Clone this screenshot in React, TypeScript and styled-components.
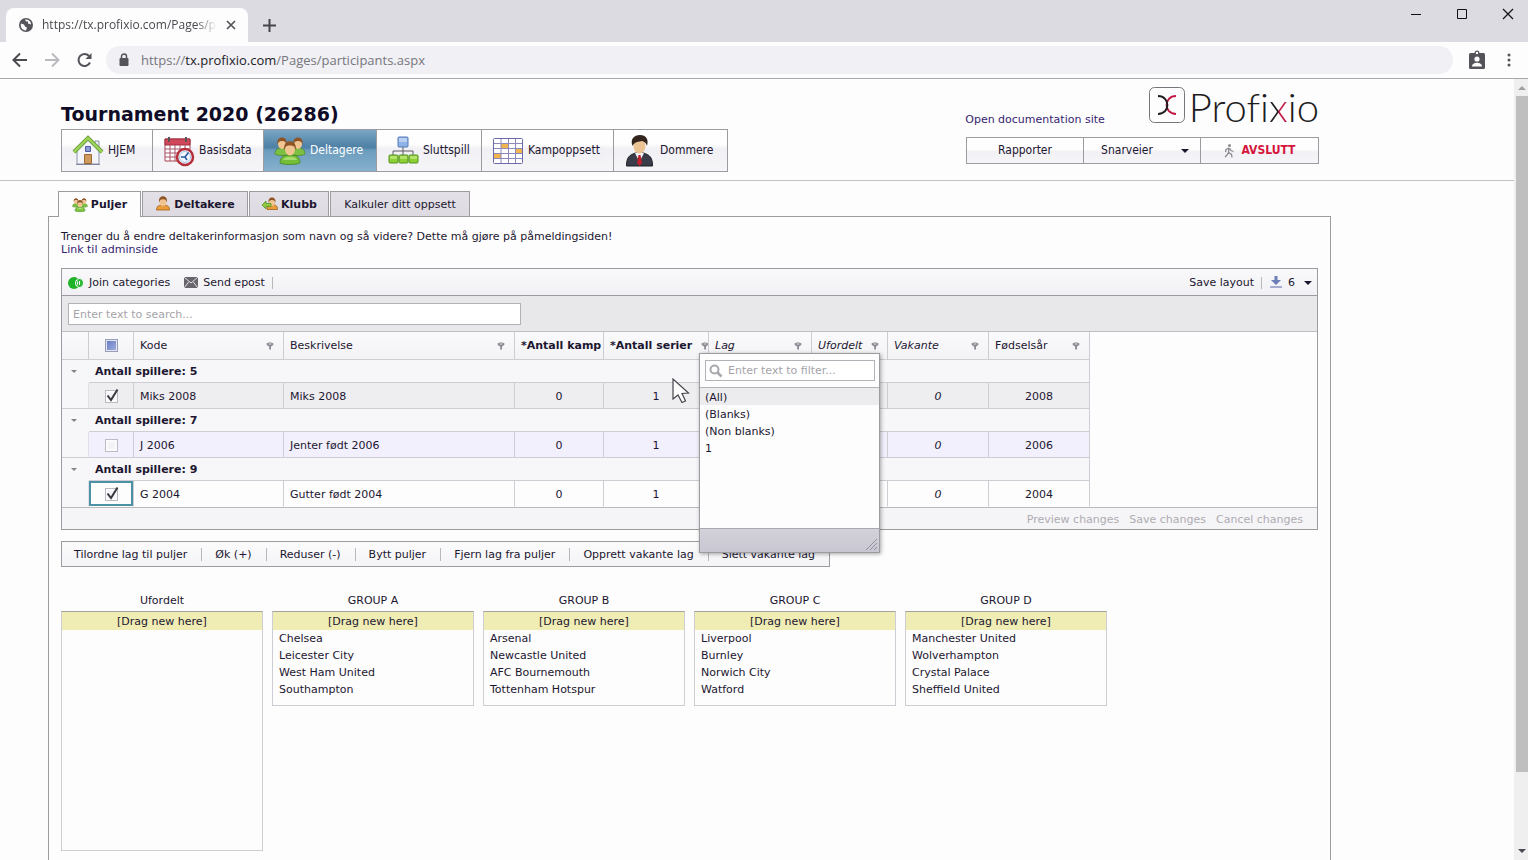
import React from "react";
import styled, { createGlobalStyle, css } from "styled-components";

const ink = "#1c1630";
const line = "#9c9b9f";
const softLine = "#cfcdd4";
const verdana = `"DejaVu Sans", Verdana, sans-serif`;
const tahoma = `"DejaVu Sans Condensed", Tahoma, sans-serif`;
const segoe = `"Open Sans", "Segoe UI", sans-serif`;

const GlobalStyle = createGlobalStyle`
  *, *::before, *::after { box-sizing: border-box; }
  body { margin: 0; background: #fdfdfd; color: ${ink}; font-family: ${verdana}; font-size: 11px; line-height: 13px; }
  button, input { font: inherit; color: inherit; }
  button { background: none; border: 0; padding: 0; cursor: pointer; white-space: nowrap; }
  a { color: #35246f; text-decoration: none; }
  svg { display: block; flex: none; }
`;

/* ---------- browser window ---------- */

const Window = styled.div`
  display: flex;
  flex-direction: column;
  height: 100vh;
`;

const TabStrip = styled.div`
  display: flex;
  align-items: flex-end;
  height: 42px;
  padding-left: 6px;
  background: #dcdbe1;
`;

const BrowserTab = styled.div`
  display: flex;
  align-items: center;
  width: 242px;
  height: 34px;
  padding: 0 12px 0 13px;
  gap: 9px;
  border-radius: 8px 8px 0 0;
  background: #fdfdfd;
  font-family: ${segoe};
  font-size: 12px;
  color: #4b4950;
`;

const TabTitle = styled.span`
  flex: 1;
  overflow: hidden;
  white-space: nowrap;
  line-height: 18px;
  mask-image: linear-gradient(to right, #000 88%, transparent);
`;

const NewTab = styled.button`
  margin: 0 0 10px 15px;
`;

const WindowControls = styled.div`
  display: flex;
  align-self: flex-start;
  gap: 34px;
  margin: 8px 14px 0 auto;
`;

const AddressRow = styled.div`
  display: flex;
  align-items: center;
  height: 37px;
  padding: 0 17px 0 12px;
  border-bottom: 1px solid #a9a8ad;
  background: #fdfdfd;
`;

const NavButtons = styled.div`
  display: flex;
  gap: 16px;
  margin-right: 13px;
`;

const AddressBox = styled.div`
  display: flex;
  flex: 1;
  align-items: center;
  height: 28px;
  padding-left: 12px;
  gap: 11px;
  border-radius: 14px;
  background: #f0f0f5;
`;

const Address = styled.div`
  flex: 1;
  font-family: ${segoe};
  font-size: 13px;
  line-height: 20px;
  color: #77767c;
  b { font-weight: 400; color: #222127; }
`;

const BrowserMenu = styled.div`
  display: flex;
  align-items: center;
  gap: 21px;
  margin-left: 15px;
`;

const Viewport = styled.div`
  display: flex;
  flex: 1;
  min-height: 0;
`;

const Page = styled.div`
  flex: 1;
  min-width: 0;
  overflow-y: auto;
  scrollbar-width: none;
`;

const ScrollTrack = styled.div`
  display: flex;
  flex-direction: column;
  align-items: center;
  justify-content: space-between;
  width: 14px;
  padding: 7px 0 7px 2px;
  background: #efeff0;
`;

const ScrollThumb = styled.div`
  flex: 1;
  align-self: stretch;
  margin: 6px 0 77px;
  background: #c0bfc0;
`;

/* ---------- page header ---------- */

const Header = styled.header`
  display: flex;
  justify-content: space-between;
  height: 102px;
  padding: 0 195px 0 61px;
  border-bottom: 1px solid #c3c2c5;
`;

const Title = styled.h1`
  margin: 24px 0 3px;
  font-size: 19px;
  line-height: 23px;
  font-weight: 700;
  color: #100c28;
`;

const MainNav = styled.nav`
  display: flex;
  width: max-content;
  border: 1px solid ${line};
`;

const NavItem = styled.button<{ $width: number; $active?: boolean }>`
  display: flex;
  align-items: center;
  width: ${(p) => p.$width}px;
  height: 41px;
  padding-left: 10px;
  gap: 4px;
  border-right: 1px solid ${line};
  background: linear-gradient(#fefefe 35%, #f1f0f4 45%, #f5f4f7);
  font-family: ${tahoma};
  font-size: 12px;
  &:last-child { border-right: 0; }
  ${(p) =>
    p.$active &&
    css`
      background: linear-gradient(#7ba6c4, #4d80a5 42%, #6c9cbd 50%, #86b1ce);
      color: #fff;
    `}
`;

const HeaderRight = styled.div`
  display: flex;
  flex-direction: column;
  align-items: flex-end;
  gap: 13px;
  padding-top: 8px;
`;

const BrandRow = styled.div`
  display: flex;
  align-items: flex-start;
  height: 37px;
`;

const DocLink = styled.a`
  margin: 26px 44px 0 0;
`;

const Brand = styled.a`
  display: flex;
  gap: 4px;
`;

const Wordmark = styled.span`
  font-family: Lato, sans-serif;
  font-weight: 300;
  font-size: 40px;
  line-height: 40px;
  font-variant-ligatures: none;
  color: #1d1b20;
`;

const BrandX = styled.span`
  background: linear-gradient(to right, #1d1b20 45%, #c01a45 55%);
  background-clip: text;
  color: transparent;
`;

const SideMenu = styled.div`
  display: flex;
  border: 1px solid ${line};
`;

const SideButton = styled.button<{ $exit?: boolean }>`
  display: flex;
  align-items: center;
  justify-content: center;
  width: 117px;
  height: 25px;
  gap: 8px;
  border-right: 1px solid ${line};
  background: linear-gradient(#fefefe 45%, #f1f0f4 55%, #f6f5f8);
  font-family: ${tahoma};
  font-size: 12px;
  font-weight: ${(p) => (p.$exit ? 700 : 400)};
  color: ${(p) => (p.$exit ? "#d5153c" : ink)};
  &:last-child { border-right: 0; }
`;

const MenuLabel = styled.span`
  margin: 0 20px 0 6px;
`;

/* ---------- tabs and panel ---------- */

const Tabs = styled.div`
  display: flex;
  gap: 1px;
  margin: 10px 0 0 58px;
`;

const Tab = styled.button<{ $width: number; $active?: boolean; $plain?: boolean }>`
  position: relative;
  display: flex;
  align-items: center;
  justify-content: center;
  width: ${(p) => p.$width}px;
  height: ${(p) => (p.$active ? 26 : 25)}px;
  margin-bottom: ${(p) => (p.$active ? -1 : 0)}px;
  gap: 3px;
  border: 1px solid ${line};
  border-bottom: 0;
  background: ${(p) => (p.$active ? "#fdfdfd" : "linear-gradient(#e3e1e7, #dddbe1)")};
  font-weight: ${(p) => (p.$plain ? 400 : 700)};
`;

const Panel = styled.main`
  margin: 0 183px 0 48px;
  padding: 13px 12px 60px;
  border: 1px solid ${line};
`;

const Intro = styled.p`
  margin: 0 0 12px;
`;

/* ---------- grid ---------- */

const Grid = styled.section`
  border: 1px solid ${line};
`;

const GridToolbar = styled.div`
  display: flex;
  align-items: center;
  height: 27px;
  padding: 1px 5px 0 6px;
  gap: 14px;
  border-bottom: 1px solid ${line};
  background: linear-gradient(#f9f9fb, #f1f0f4);
`;

const ToolButton = styled.button`
  display: flex;
  align-items: center;
  gap: 5px;
`;

const Divider = styled.span`
  width: 1px;
  height: 12px;
  background: #b9b7be;
`;

const ToolGroup = styled.div<{ $end?: boolean }>`
  display: flex;
  align-items: center;
  gap: 7px;
  margin-left: ${(p) => (p.$end ? "auto" : "0")};
`;

const PageSize = styled.span`
  margin-right: 4px;
`;

const SearchRow = styled.div`
  padding: 7px 6px 6px;
  border-bottom: 1px solid #bfbdc2;
  background: #e8e7ea;
`;

const TextInput = styled.input`
  display: block;
  width: 100%;
  height: 22px;
  padding: 0 4px;
  border: 1px solid #b4b2b9;
  border-radius: 0;
  outline: 0;
  background: #fff;
  &::placeholder { color: #a5a3a9; opacity: 1; }
`;

const SearchInput = styled(TextInput)`
  width: 453px;
`;

const TableArea = styled.div`
  position: relative;
`;

const Table = styled.table`
  width: 1028px;
  table-layout: fixed;
  border-collapse: separate;
  border-spacing: 0;
`;

const HeadCell = styled.th<{ $tone?: "bold" | "italic" }>`
  height: 28px;
  padding: 0;
  overflow: hidden;
  border-right: 1px solid ${softLine};
  border-bottom: 1px solid ${softLine};
  background: linear-gradient(#fafafc, #f3f2f5);
  font-weight: ${(p) => (p.$tone === "bold" ? 700 : 400)};
  font-style: ${(p) => (p.$tone === "italic" ? "italic" : "normal")};
  text-align: left;
`;

const HeadInner = styled.div<{ $center?: boolean }>`
  display: flex;
  align-items: center;
  justify-content: ${(p) => (p.$center ? "center" : "space-between")};
  gap: 9px;
  padding: ${(p) => (p.$center ? "0" : "0 9px 0 6px")};
  overflow: hidden;
  white-space: nowrap;
`;

const GroupCell = styled.th<{ $toggle?: boolean }>`
  height: 23px;
  padding: ${(p) => (p.$toggle ? "0 0 0 9px" : "0 6px")};
  border-right: ${(p) => (p.$toggle ? "0" : `1px solid ${softLine}`)};
  border-bottom: ${(p) => (p.$toggle ? "0" : `1px solid ${softLine}`)};
  background: #f7f7f9;
  text-align: left;
  font-weight: 700;
`;

const rowTone = { selected: "#eeedf0", odd: "#f2f0fc", plain: "#fdfdfd" };

const DataRow = styled.tr<{ $tone: keyof typeof rowTone }>`
  td {
    height: 26px;
    padding: 1px 6px 0;
    border-right: 1px solid ${softLine};
    border-bottom: 1px solid ${softLine};
    background: ${(p) => rowTone[p.$tone]};
    white-space: nowrap;
  }
  td:first-child { border-right-color: #e2e0e6; background: #f7f7f9; }
`;

const Body = styled.tbody`
  &:last-child ${DataRow} td { border-bottom-color: transparent; }
`;

const NumCell = styled.td<{ $italic?: boolean }>`
  text-align: center;
  font-style: ${(p) => (p.$italic ? "italic" : "normal")};
`;

const CheckCell = styled.td<{ $focused?: boolean }>`
  box-shadow: ${(p) => (p.$focused ? "inset 0 0 0 2px #4a92a4" : "none")};
`;

const CheckWrap = styled.label`
  position: relative;
  display: block;
  width: 13px;
  height: 13px;
  margin: 0 auto;
  svg { position: absolute; left: 0; top: -2px; pointer-events: none; }
`;

const Check = styled.input<{ $mixed?: boolean }>`
  appearance: none;
  display: block;
  width: 13px;
  height: 13px;
  margin: 0;
  border: 1px solid ${(p) => (p.$mixed ? "#9a9fb8" : "#bcbac2")};
  background: ${(p) => (p.$mixed ? "linear-gradient(135deg, #6478bd, #a3b3e4)" : "#f3f2f6")};
  box-shadow: inset 0 0 0 ${(p) => (p.$mixed ? "1px #e3e6f2" : "2px #fbfbfd")};
`;

const GridFooter = styled.div`
  display: flex;
  justify-content: flex-end;
  align-items: center;
  height: 22px;
  padding: 1px 14px 0 0;
  gap: 10px;
  border-top: 1px solid #bab9bd;
  background: #f5f5f7;
  button { color: #aeacb2; }
`;

/* ---------- filter popup ---------- */

const Popup = styled.div`
  position: absolute;
  left: 637px;
  top: 21px;
  z-index: 2;
  display: flex;
  flex-direction: column;
  width: 181px;
  height: 200px;
  border: 1px solid ${line};
  background: #fdfdfd;
  box-shadow: 1px 1px 4px rgba(0, 0, 0, 0.35);
`;

const FilterBox = styled.div`
  position: relative;
  padding: 6px 4px 6px 5px;
  border-bottom: 1px solid #b3b1b7;
  svg { position: absolute; left: 9px; top: 10px; }
  input { padding-left: 22px; height: 21px; }
`;

const Options = styled.ul`
  flex: 1;
  margin: 0;
  padding: 0;
  list-style: none;
`;

const Option = styled.li<{ $hover?: boolean }>`
  padding: 3px 5px 1px;
  background: ${(p) => (p.$hover ? "#ececef" : "none")};
`;

const PopupFoot = styled.div`
  display: flex;
  justify-content: flex-end;
  align-items: flex-end;
  height: 24px;
  border-top: 1px solid #a9a7b0;
  background: linear-gradient(#d3d1da, #c9c7d1);
`;

const Pointer = styled.svg`
  position: absolute;
  left: 610px;
  top: 46px;
  z-index: 3;
`;

/* ---------- group tools ---------- */

const ActionBar = styled.div`
  display: flex;
  align-items: center;
  width: max-content;
  height: 26px;
  margin: 11px 0 26px;
  border: 1px solid ${line};
  background: linear-gradient(#fbfbfc, #f4f3f6);
`;

const Action = styled.button`
  padding: 0 14px 0 13px;
  border-left: 1px solid #b9b7be;
  &:first-child { padding-left: 12px; border-left: 0; }
`;

const Groups = styled.div`
  display: flex;
  align-items: flex-start;
  gap: 9px;
`;

const Group = styled.section`
  width: 202px;
`;

const GroupName = styled.h2`
  margin: 0 0 3px;
  font-size: 11px;
  line-height: 15px;
  font-weight: 400;
  text-align: center;
`;

const TeamList = styled.ul<{ $height: number }>`
  min-height: ${(p) => p.$height}px;
  margin: 0;
  padding: 0;
  border: 1px solid ${softLine};
  border-top-color: #a3a29c;
  list-style: none;
`;

const DropZone = styled.li`
  padding: 3px 0 2px;
  background: #f0edb4;
  text-align: center;
`;

const Team = styled.li`
  padding: 2px 6px;
`;

/* ---------- icons ---------- */

const Head = ({ x, y, s = 1 }: { x: number; y: number; s?: number }) => (
  <g transform={`translate(${x} ${y}) scale(${s})`}>
    <ellipse cx="0" cy="1" rx="4" ry="5" fill="#f0c592" />
    <path d="M-4.500 2C-5.500-3-3-5.500 0-5.500S5.500-3 4.500 2C4-1 3-2 0-2S-4-1-4.500 2z" fill="#8f5426" />
  </g>
);

const PeopleIcon = ({ size }: { size: number }) => (
  <svg width={size} height={size} viewBox="0 0 32 32">
    <path d="M1 19c0-5 4-6 7-6s7 1 7 6c-3 2-11 2-14 0zM17 19c0-5 4-6 7-6s7 1 7 6c-3 2-11 2-14 0z" fill="#7cc043" stroke="#4f8a27" strokeWidth=".8" />
    <Head x={8} y={8} />
    <Head x={24} y={8} />
    <path d="M6 28c0-7 5-8 10-8s10 1 10 8c-4 2-16 2-20 0z" fill="#74bd38" stroke="#4a8523" strokeWidth=".8" />
    <path d="M9 25c1-3 4-3 7-3s6 0 7 3z" fill="#a5dc6c" />
    <Head x={16} y={13} s={1.25} />
  </svg>
);

const HouseIcon = () => (
  <svg width="32" height="32" viewBox="0 0 32 32">
    <path d="M23 6h4v9h-4z" fill="#eef0f6" stroke="#8b8fa5" />
    <path d="M5 16L16 5l11 11v13H5z" fill="#f3f5fb" stroke="#8d95ad" />
    <path d="M2 17L16 3l14 14" fill="none" stroke="#5f8f2b" strokeWidth="4" />
    <path d="M2 17L16 3l14 14" fill="none" stroke="#9bd35a" strokeWidth="2.500" />
    <path d="M13.500 11.500h5v5h-5z" fill="#8f9bd6" stroke="#4f5f9e" />
    <path d="M12.500 19.500h7v9h-7z" fill="#cf9a5c" stroke="#9a6a32" />
    <path d="M4 29.500h24" stroke="#7f869c" />
  </svg>
);

const CalendarIcon = () => (
  <svg width="32" height="32" viewBox="0 0 32 32">
    <path d="M2 4h25v22H2z" fill="#fff" stroke="#a64352" />
    <path d="M2 4h25v6H2z" fill="#d0465a" stroke="#a2303f" />
    <path d="M6 2v5M23 2v5" stroke="#555" strokeWidth="2" />
    <path d="M7 10v16M12 10v16M17 10v16M22 10v16M2 14h25M2 18h25M2 22h25" stroke="#a8566b" />
    <circle cx="22" cy="22" r="8" fill="#f3f8ff" stroke="#b52e3c" strokeWidth="2.500" />
    <circle cx="22" cy="22" r="5.500" fill="none" stroke="#a9c4e4" />
    <path d="M25.500 17.500L22 22h-4M22 22l2 3" fill="none" stroke="#28559c" strokeWidth="1.500" />
  </svg>
);

const TreeIcon = () => (
  <svg width="32" height="32" viewBox="0 0 32 32">
    <path d="M16 12v4M6 20v-4h20v4M16 16v4" fill="none" stroke="#5a5a62" />
    <rect x="11" y="2" width="10" height="10" rx="1" fill="#8fb3e6" stroke="#5277b4" />
    <path d="M12 3h8v4h-8z" fill="#b9d0f2" />
    {[2, 12, 22].map((x) => (
      <g key={x}>
        <rect x={x} y="20" width="9" height="8" rx="1" fill="#8bcf35" stroke="#559321" />
        <path d={`M${x + 1} 21h7v3h-7z`} fill="#b5e46c" />
      </g>
    ))}
  </svg>
);

const ScheduleIcon = () => (
  <svg width="32" height="32" viewBox="0 0 32 32">
    <rect x="1.500" y="3.500" width="29" height="25" rx="1" fill="#fff" stroke="#6b6aa6" />
    <path d="M9 8h7v5H9zM23 13h7v5h-7zM2 18h7v5H2z" fill="#f2b44c" />
    <path d="M9 4v24M16.500 4v24M23.500 4v24M2 8.500h28M2 13.500h28M2 18.500h28M2 23.500h28" stroke="#8a89bd" />
  </svg>
);

const RefereeIcon = () => (
  <svg width="32" height="32" viewBox="0 0 32 32">
    <path d="M2.500 31c0-9 3-11 9-13h8c6 2 9 4 9 13z" fill="#3a3d49" stroke="#1e1f27" />
    <path d="M11 18l4.500 9L20 18z" fill="#f5f5f8" />
    <path d="M14.500 20h2l1.500 8-2.500 3-2.500-3z" fill="#c0202c" />
    <ellipse cx="15.500" cy="11" rx="6" ry="7.500" fill="#ecc493" />
    <path d="M8.500 11C6 4 10 0 16 0s9 4 7 11c-1-3-2-4-5-5-3 1-7 0-9.500 5z" fill="#33241c" />
  </svg>
);

const PersonIcon = () => (
  <svg width="16" height="16" viewBox="0 0 16 16">
    <path d="M1.500 14c0-4 2-4.500 5-5h3c3 .5 5 1 5 5z" fill="#e89c3c" stroke="#a35f18" strokeWidth=".8" />
    <Head x={8} y={5} s={0.85} />
  </svg>
);

const ClubIcon = () => (
  <svg width="17" height="16" viewBox="0 0 17 16">
    <path d="M6 13.500c0-4 2-4.500 4.500-5h1.500c2.500.5 4.500 1 4.500 5z" fill="#e89c3c" stroke="#a35f18" strokeWidth=".8" />
    <Head x={11} y={5.500} s={0.75} />
    <path d="M1 9l4-4v2.500h5v3H5V13z" fill="#8ccc3e" stroke="#5a9125" strokeWidth=".8" />
  </svg>
);

const Arrow = ({ color = ink, size = 8 }: { color?: string; size?: number }) => (
  <svg width={size} height={size / 2} viewBox="0 0 8 4">
    <path d="M0 0h8L4 4z" fill={color} />
  </svg>
);

const FilterIcon = () => (
  <svg width="8" height="8" viewBox="0 0 8 8">
    <path d="M.5 2c0-2 7-2 7 0 0 1-1.500 2-2.500 2.500V7.500H3.200V4.500C2 4 .5 3 .5 2z" fill="#8b8991" />
    <path d="M2.500 2h3" stroke="#d9d8dd" />
  </svg>
);

const Tick = () => (
  <svg width="15" height="14" viewBox="0 0 15 14">
    <path d="M2.500 7.500l3.500 4.500L12.500 1.500" fill="none" stroke="#39373f" strokeWidth="2" />
  </svg>
);

const BrandMark = () => (
  <svg width="36" height="36" viewBox="0 0 36 36">
    <rect x=".5" y=".5" width="35" height="35" rx="5" fill="none" stroke="#77757b" />
    <path d="M27 9c-12.500 0-12.500 18 0 18" fill="none" stroke="#c01a45" strokeWidth="2" />
    <path d="M9 9c12.500 0 12.500 18 0 18" fill="none" stroke="#1d1b20" strokeWidth="2" />
  </svg>
);

/* ---------- data ---------- */

const navItems = [
  { label: "HJEM", icon: <HouseIcon />, width: 91 },
  { label: "Basisdata", icon: <CalendarIcon />, width: 111 },
  { label: "Deltagere", icon: <PeopleIcon size={32} />, width: 113, active: true },
  { label: "Sluttspill", icon: <TreeIcon />, width: 105 },
  { label: "Kampoppsett", icon: <ScheduleIcon />, width: 132 },
  { label: "Dommere", icon: <RefereeIcon />, width: 113 },
];

const columns = [27, 45, 150, 231, 89, 105, 103, 76, 101, 101];

const headings: { label: string; tone?: "bold" | "italic"; noFilter?: boolean }[] = [
  { label: "Kode" },
  { label: "Beskrivelse" },
  { label: "*Antall kamp", tone: "bold", noFilter: true },
  { label: "*Antall serier", tone: "bold" },
  { label: "Lag", tone: "italic" },
  { label: "Ufordelt", tone: "italic" },
  { label: "Vakante", tone: "italic" },
  { label: "Fødselsår" },
];

const rows = [
  { players: 5, code: "Miks 2008", text: "Miks 2008", year: 2008, tone: "selected", checked: true, focused: false },
  { players: 7, code: "J 2006", text: "Jenter født 2006", year: 2006, tone: "odd", checked: false, focused: false },
  { players: 9, code: "G 2004", text: "Gutter født 2004", year: 2004, tone: "plain", checked: true, focused: true },
] as const;

const actions = [
  "Tilordne lag til puljer",
  "Øk (+)",
  "Reduser (-)",
  "Bytt puljer",
  "Fjern lag fra puljer",
  "Opprett vakante lag",
  "Slett vakante lag",
];

const groups = [
  { name: "Ufordelt", teams: [], height: 240 },
  { name: "GROUP A", teams: ["Chelsea", "Leicester City", "West Ham United", "Southampton"], height: 95 },
  { name: "GROUP B", teams: ["Arsenal", "Newcastle United", "AFC Bournemouth", "Tottenham Hotspur"], height: 95 },
  { name: "GROUP C", teams: ["Liverpool", "Burnley", "Norwich City", "Watford"], height: 95 },
  { name: "GROUP D", teams: ["Manchester United", "Wolverhampton", "Crystal Palace", "Sheffield United"], height: 95 },
];

/* ---------- sections ---------- */

const BrowserChrome = () => (
  <>
    <TabStrip>
      <BrowserTab>
        <svg width="14" height="14" viewBox="0 0 14 14">
          <circle cx="7" cy="7" r="7" fill="#56545b" />
          <path d="M2 5.500l3 1 1 2 2 1-1 3c-4 0-6-4-5-7zM6 1.500l1 2 2 0 0 2 3 1c0-3-2-5-6-5z" fill="#fdfdfd" />
        </svg>
        <TabTitle>https://tx.profixio.com/Pages/participants.aspx</TabTitle>
        <button aria-label="Close tab">
          <svg width="10" height="10" viewBox="0 0 10 10">
            <path d="M1 1l8 8M9 1l-8 8" stroke="#55535a" strokeWidth="1.700" />
          </svg>
        </button>
      </BrowserTab>
      <NewTab aria-label="New tab">
        <svg width="13" height="13" viewBox="0 0 13 13">
          <path d="M6.500 0v13M0 6.500h13" stroke="#47454c" strokeWidth="2" />
        </svg>
      </NewTab>
      <WindowControls>
        <button aria-label="Minimize">
          <svg width="12" height="12" viewBox="0 0 12 12"><path d="M1 6.500h10" stroke="#111" /></svg>
        </button>
        <button aria-label="Maximize">
          <svg width="12" height="12" viewBox="0 0 12 12"><path d="M1.500 1.500h9v9h-9z" fill="none" stroke="#111" /></svg>
        </button>
        <button aria-label="Close">
          <svg width="12" height="12" viewBox="0 0 12 12"><path d="M1 1l10 10M11 1L1 11" stroke="#111" strokeWidth="1.200" /></svg>
        </button>
      </WindowControls>
    </TabStrip>
    <AddressRow>
      <NavButtons>
        <button aria-label="Back">
          <svg width="16" height="16" viewBox="0 0 16 16"><path d="M15 8H2M8 1.500L1.500 8 8 14.500" fill="none" stroke="#4c4a51" strokeWidth="2" /></svg>
        </button>
        <button aria-label="Forward">
          <svg width="16" height="16" viewBox="0 0 16 16"><path d="M1 8h13M8 1.500L14.500 8 8 14.500" fill="none" stroke="#bab9be" strokeWidth="2" /></svg>
        </button>
        <button aria-label="Reload">
          <svg width="17" height="16" viewBox="0 0 17 16">
            <path d="M14 10.500A6 6 0 1 1 13 4" fill="none" stroke="#55535a" strokeWidth="2" />
            <path d="M15.500 1v6h-6z" fill="#55535a" />
          </svg>
        </button>
      </NavButtons>
      <AddressBox>
        <svg width="12" height="14" viewBox="0 0 12 14">
          <path d="M2.500 5h7a1 1 0 0 1 1 1v6a1 1 0 0 1-1 1h-7a1 1 0 0 1-1-1V6a1 1 0 0 1 1-1z" fill="#55535a" />
          <path d="M3.500 6V3.500a2.500 2.500 0 0 1 5 0V6" fill="none" stroke="#55535a" strokeWidth="1.500" />
        </svg>
        <Address role="textbox" aria-label="Address" tabIndex={0}>
          https://<b>tx.profixio.com</b>/Pages/participants.aspx
        </Address>
      </AddressBox>
      <BrowserMenu>
        <svg width="18" height="20" viewBox="0 0 18 20">
          <rect x="1" y="3" width="16" height="16" rx="1.500" fill="#55535a" />
          <circle cx="9" cy="3" r="1.900" fill="#fdfdfd" stroke="#55535a" strokeWidth="1.200" />
          <circle cx="9" cy="9" r="2.600" fill="#fdfdfd" />
          <path d="M4 16.500c0-5 10-5 10 0z" fill="#fdfdfd" />
        </svg>
        <button aria-label="Menu">
          <svg width="4" height="14" viewBox="0 0 4 14">
            <circle cx="2" cy="2" r="1.500" fill="#55535a" />
            <circle cx="2" cy="7" r="1.500" fill="#55535a" />
            <circle cx="2" cy="12" r="1.500" fill="#55535a" />
          </svg>
        </button>
      </BrowserMenu>
    </AddressRow>
  </>
);

const PageHeader = () => (
  <Header>
    <div>
      <Title>Tournament 2020 (26286)</Title>
      <MainNav>
        {navItems.map((n) => (
          <NavItem key={n.label} $width={n.width} $active={n.active}>
            {n.icon}
            {n.label}
          </NavItem>
        ))}
      </MainNav>
    </div>
    <HeaderRight>
      <BrandRow>
        <DocLink href="#docs">Open documentation site</DocLink>
        <Brand href="#home" aria-label="Profixio">
          <BrandMark />
          <Wordmark>Profi<BrandX>x</BrandX>io</Wordmark>
        </Brand>
      </BrandRow>
      <SideMenu>
        <SideButton>Rapporter</SideButton>
        <SideButton aria-haspopup="menu">
          <MenuLabel>Snarveier</MenuLabel>
          <Arrow />
        </SideButton>
        <SideButton $exit>
          <svg width="10" height="14" viewBox="0 0 10 14">
            <circle cx="5.500" cy="1.500" r="1.500" fill="#8d8b92" />
            <path d="M5 4L4.500 8.500 7.500 10.500 8 13.500M4.500 8.500L3 11 1 13M5 4L2 5.500 1.500 8M5.500 4L7 6.500l2.500 1" fill="none" stroke="#8d8b92" strokeWidth="1.300" />
          </svg>
          AVSLUTT
        </SideButton>
      </SideMenu>
    </HeaderRight>
  </Header>
);

const FilterPopup = () => (
  <Popup role="dialog" aria-label="Filter">
    <FilterBox>
      <TextInput aria-label="Filter values" placeholder="Enter text to filter..." />
      <svg width="14" height="14" viewBox="0 0 14 14">
        <circle cx="5.500" cy="5.500" r="4" fill="none" stroke="#aaa8ae" strokeWidth="2" />
        <path d="M8.500 8.500l4 4" stroke="#aaa8ae" strokeWidth="2.500" />
      </svg>
    </FilterBox>
    <Options>
      <Option $hover>(All)</Option>
      <Option>(Blanks)</Option>
      <Option>(Non blanks)</Option>
      <Option>1</Option>
    </Options>
    <PopupFoot>
      <svg width="14" height="14" viewBox="0 0 14 14">
        <path d="M1 12L12 1M5 12l7-7M9 12l3-3" stroke="#918f9a" />
      </svg>
    </PopupFoot>
  </Popup>
);

const CategoryGrid = () => (
  <Grid>
    <GridToolbar>
      <ToolButton>
        <svg width="16" height="12" viewBox="0 0 16 12">
          <circle cx="6" cy="6" r="6" fill="#1fb329" />
          <ellipse cx="11.500" cy="6" rx="4" ry="4.500" fill="#2fbb38" stroke="#f6f6f8" />
          <path d="M8.500 3c1.500 2 1.500 4 0 6M11.500 4v4" fill="none" stroke="#f6f6f8" />
        </svg>
        Join categories
      </ToolButton>
      <ToolGroup>
        <ToolButton>
          <svg width="14" height="11" viewBox="0 0 15 11" preserveAspectRatio="none">
            <path d="M0 0h15v11H0z" fill="#68666c" />
            <path d="M0 0l7.500 6L15 0M0 11l5-6M15 11l-5-6" fill="none" stroke="#e4e3e8" />
          </svg>
          Send epost
        </ToolButton>
        <Divider />
      </ToolGroup>
      <ToolGroup $end>
        <button>Save layout</button>
        <Divider />
        <ToolButton aria-haspopup="menu" aria-label="Rows per page: 6">
          <svg width="14" height="13" viewBox="0 0 14 13">
            <path d="M5.500 0h3v4H12L7 9 2 4h3.500z" fill="#6d7fb8" />
            <path d="M1 11h12" stroke="#6d7fb8" strokeWidth="1.200" />
          </svg>
          <PageSize>6</PageSize>
          <Arrow />
        </ToolButton>
      </ToolGroup>
    </GridToolbar>
    <SearchRow>
      <SearchInput aria-label="Search" placeholder="Enter text to search..." />
    </SearchRow>
    <TableArea>
      <Table>
        <colgroup>
          {columns.map((w, i) => (
            <col key={i} width={w} />
          ))}
        </colgroup>
        <thead>
          <tr>
            <HeadCell />
            <HeadCell>
              <HeadInner $center>
                <Check type="checkbox" aria-label="Select all" $mixed />
              </HeadInner>
            </HeadCell>
            {headings.map((h) => (
              <HeadCell key={h.label} $tone={h.tone}>
                <HeadInner>
                  {h.label}
                  {!h.noFilter && <FilterIcon />}
                </HeadInner>
              </HeadCell>
            ))}
          </tr>
        </thead>
        {rows.map((r) => (
          <Body key={r.code}>
            <tr>
              <GroupCell $toggle>
                <Arrow color="#85838a" size={6} />
              </GroupCell>
              <GroupCell colSpan={9} scope="rowgroup">Antall spillere: {r.players}</GroupCell>
            </tr>
            <DataRow $tone={r.tone}>
              <td />
              <CheckCell $focused={r.focused}>
                <CheckWrap>
                  <Check type="checkbox" defaultChecked={r.checked} aria-label={`Select ${r.code}`} />
                  {r.checked && <Tick />}
                </CheckWrap>
              </CheckCell>
              <td>{r.code}</td>
              <td>{r.text}</td>
              <NumCell>0</NumCell>
              <NumCell>1</NumCell>
              <NumCell $italic />
              <NumCell $italic />
              <NumCell $italic>0</NumCell>
              <NumCell>{r.year}</NumCell>
            </DataRow>
          </Body>
        ))}
      </Table>
      <Pointer width="18" height="26" viewBox="0 0 18 26">
        <path d="M1 1v20l5-4 4 7.500 3.500-1.500-3.500-7.500 6.500-.5z" fill="#fdfdfd" stroke="#47454c" strokeWidth="1.200" />
      </Pointer>
      <FilterPopup />
    </TableArea>
    <GridFooter>
      <button disabled>Preview changes</button>
      <button disabled>Save changes</button>
      <button disabled>Cancel changes</button>
    </GridFooter>
  </Grid>
);

export default function App() {
  return (
    <Window>
      <GlobalStyle />
      <BrowserChrome />
      <Viewport>
        <Page>
          <PageHeader />
          <Tabs role="tablist">
            <Tab $width={83} $active role="tab"><PeopleIcon size={16} />Puljer</Tab>
            <Tab $width={106} role="tab"><PersonIcon />Deltakere</Tab>
            <Tab $width={80} role="tab"><ClubIcon />Klubb</Tab>
            <Tab $width={140} $plain role="tab">Kalkuler ditt oppsett</Tab>
          </Tabs>
          <Panel>
            <Intro>
              Trenger du å endre deltakerinformasjon som navn og så videre? Dette må gjøre på påmeldingsiden!
              <br />
              <a href="#admin">Link til adminside</a>
            </Intro>
            <CategoryGrid />
            <ActionBar>
              {actions.map((a) => (
                <Action key={a}>{a}</Action>
              ))}
            </ActionBar>
            <Groups>
              {groups.map((g) => (
                <Group key={g.name}>
                  <GroupName>{g.name}</GroupName>
                  <TeamList $height={g.height}>
                    <DropZone>[Drag new here]</DropZone>
                    {g.teams.map((t) => (
                      <Team key={t}>{t}</Team>
                    ))}
                  </TeamList>
                </Group>
              ))}
            </Groups>
          </Panel>
        </Page>
        <ScrollTrack>
          <svg width="8" height="4" viewBox="0 0 8 4"><path d="M0 4h8L4 0z" fill="#a09fa4" /></svg>
          <ScrollThumb />
          <Arrow color="#4b494f" />
        </ScrollTrack>
      </Viewport>
    </Window>
  );
}
